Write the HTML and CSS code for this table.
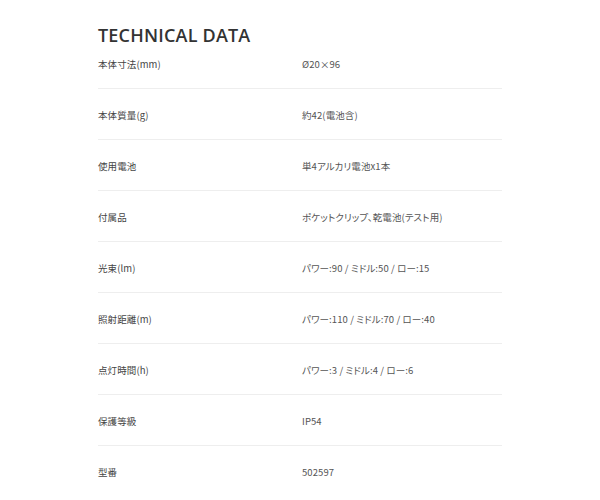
FILE: index.html
```html
<!DOCTYPE html>
<html lang="ja">
<head>
<meta charset="utf-8">
<title>TECHNICAL DATA</title>
<link rel="stylesheet" href="styles.css">
</head>
<body>
<section class="spec">
  <h2 class="spec-title">TECHNICAL DATA</h2>
  <dl class="spec-list">
    <div class="spec-row"><dt>本体寸法(mm)</dt><dd>Ø20×96</dd></div>
    <div class="spec-row"><dt>本体質量(g)</dt><dd>約42(電池含)</dd></div>
    <div class="spec-row"><dt>使用電池</dt><dd>単4アルカリ電池x1本</dd></div>
    <div class="spec-row"><dt>付属品</dt><dd>ポケットクリップ、乾電池(テスト用)</dd></div>
    <div class="spec-row"><dt>光束(lm)</dt><dd>パワー:90 / ミドル:50 / ロー:15</dd></div>
    <div class="spec-row"><dt>照射距離(m)</dt><dd>パワー:110 / ミドル:70 / ロー:40</dd></div>
    <div class="spec-row"><dt>点灯時間(h)</dt><dd>パワー:3 / ミドル:4 / ロー:6</dd></div>
    <div class="spec-row"><dt>保護等級</dt><dd>IP54</dd></div>
    <div class="spec-row"><dt>型番</dt><dd>502597</dd></div>
  </dl>
</section>
</body>
</html>
```
FILE: styles.css
```css
html, body {
  margin: 0;
  padding: 0;
  background: #fff;
}

.spec {
  width: 404px;
  margin: 0 auto;
  padding-top: 26px;
}

.spec-title {
  margin: 0;
  font-family: "Open Sans", "Noto Sans", sans-serif;
  font-weight: 600;
  font-size: 18px;
  line-height: 19px;
  letter-spacing: 0.2px;
  color: #333;
}

.spec-list {
  margin: 0;
  padding: 0;
}

.spec-row {
  display: grid;
  grid-template-columns: 1fr 1fr;
  padding: 19px 0 17px;
  border-bottom: 1px solid #eeeeee;
  font-family: "Noto Sans CJK JP", "Noto Sans", sans-serif;
  font-feature-settings: "palt";
  font-size: 9.5px;
  line-height: 14px;
  letter-spacing: 0.1px;
  color: #444;
}

.spec-row:first-child {
  padding-top: 12px;
}

.spec-row:last-child {
  border-bottom: none;
}

.spec-row dt,
.spec-row dd {
  margin: 0;
}

.spec-row dd {
  padding-left: 2px;
  color: #555;
}
```
